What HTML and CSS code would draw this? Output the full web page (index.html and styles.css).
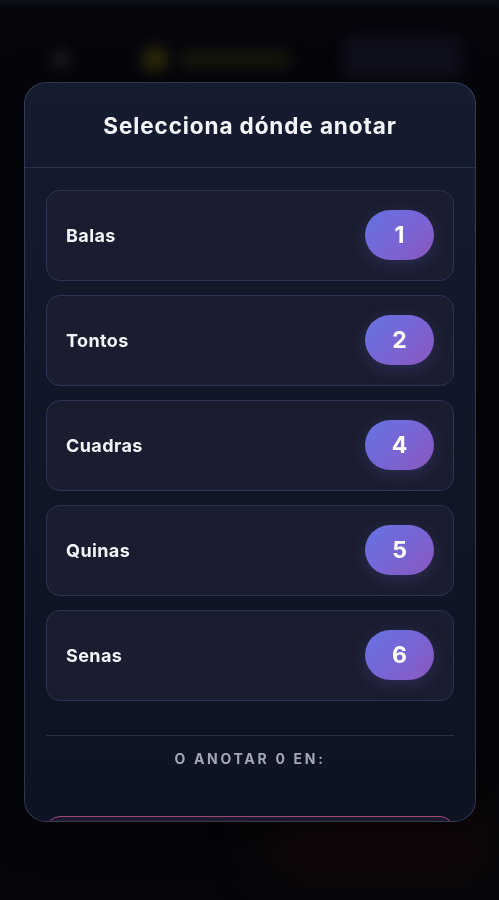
FILE: index.html
```html
<!DOCTYPE html>
<html lang="es">
<head>
    <meta charset="UTF-8">
    <meta name="viewport" content="width=device-width, initial-scale=1.0">
    <title>Anotar</title>
    <link rel="stylesheet" href="styles.css">
</head>
<body>
    <div class="app">
        <header class="topbar">
            <div class="back-dot"></div>
            <div class="brand">
                <span class="brand-coin"></span>
                <span class="brand-bar"></span>
            </div>
            <div class="top-btn"></div>
        </header>
        <div class="bottom-glow"></div>
    </div>

    <div class="overlay">
        <div class="modal">
            <div class="modal-header">
                <h2>Selecciona dónde anotar</h2>
            </div>
            <div class="modal-body">
                <div class="options">
                    <button class="option"><span class="option-name">Balas</span><span class="badge">1</span></button>
                    <button class="option"><span class="option-name">Tontos</span><span class="badge">2</span></button>
                    <button class="option"><span class="option-name">Cuadras</span><span class="badge">4</span></button>
                    <button class="option"><span class="option-name">Quinas</span><span class="badge">5</span></button>
                    <button class="option"><span class="option-name">Senas</span><span class="badge">6</span></button>
                </div>
                <div class="zero-section">
                    <div class="zero-label">O ANOTAR 0 EN:</div>
                    <button class="zero-btn" aria-label="Anotar 0"></button>
                </div>
            </div>
        </div>
    </div>
</body>
</html>
```

FILE: styles.css
```css
* {
    margin: 0;
    padding: 0;
    box-sizing: border-box;
}

body {
    font-family: Inter, 'Noto Sans', 'Liberation Sans', sans-serif;
    background-color: #04060b;
    color: #ffffff;
    height: 900px;
    overflow: hidden;
}

.app {
    height: 900px;
    background: linear-gradient(180deg, #0e1018 0, #05060c 10px, #04060b 100%);
    position: relative;
}

.topbar {
    display: flex;
    align-items: center;
    padding: 38px 38px 0 52px;
    filter: blur(7px);
    opacity: 0.5;
}

.back-dot {
    width: 18px;
    height: 18px;
    border-radius: 50%;
    background: #3a3a40;
}

.brand {
    display: flex;
    align-items: center;
    gap: 12px;
    margin-left: 72px;
}

.brand-coin {
    width: 26px;
    height: 26px;
    border-radius: 50%;
    background: #564b06;
}

.brand-bar {
    width: 110px;
    height: 18px;
    border-radius: 6px;
    background: #2a280c;
}

.top-btn {
    margin-left: auto;
    width: 118px;
    height: 42px;
    border-radius: 12px;
    background: #1a1a30;
}

.bottom-glow {
    position: absolute;
    left: 270px;
    top: 810px;
    width: 220px;
    height: 60px;
    background: #2a0a08;
    filter: blur(30px);
    opacity: 0.6;
}

.overlay {
    position: fixed;
    inset: 0;
    padding: 82px 23px 0 24px;
}

.modal {
    height: 740px;
    background: linear-gradient(180deg, #161c30 0%, #111728 40%, #0e1322 100%);
    border: 1px solid rgba(110, 120, 160, 0.35);
    border-radius: 22px;
    overflow: hidden;
    display: flex;
    flex-direction: column;
    box-shadow: 0 10px 40px rgba(0, 0, 0, 0.6);
}

.modal-header {
    height: 85px;
    flex-shrink: 0;
    display: flex;
    align-items: center;
    justify-content: center;
    border-bottom: 1px solid rgba(120, 130, 170, 0.22);
}

.modal-header h2 {
    font-size: 22.5px;
    font-weight: 700;
    color: #f4f5f8;
    letter-spacing: 0.9px;
    padding-top: 1px;
}

.modal-body {
    padding: 22px 21px 0;
}

.options {
    display: flex;
    flex-direction: column;
    gap: 14.5px;
}

.option {
    height: 90.5px;
    display: flex;
    align-items: center;
    justify-content: space-between;
    padding: 0 19px 0 19px;
    background: #1a1d2f;
    border: 1px solid #2d3352;
    border-radius: 14px;
    font-family: inherit;
    color: #ffffff;
    cursor: pointer;
}

.option-name {
    font-size: 18px;
    font-weight: 700;
    letter-spacing: 0.4px;
    color: #f3f4f7;
}

.badge {
    width: 69px;
    height: 50px;
    border-radius: 25px;
    background: linear-gradient(135deg, #6473e2 0%, #7a64d4 55%, #8a57bd 100%);
    box-shadow: 0 4px 16px rgba(100, 90, 200, 0.25);
    display: flex;
    align-items: center;
    justify-content: center;
    font-size: 23px;
    font-weight: 700;
    color: #ffffff;
}

.zero-section {
    margin-top: 34px;
    border-top: 1px solid rgba(120, 130, 170, 0.25);
    padding-top: 14px;
}

.zero-label {
    text-align: center;
    font-size: 14px;
    font-weight: 700;
    letter-spacing: 2.7px;
    color: #a3a7b4;
}

.zero-btn {
    display: block;
    width: 100%;
    height: 60px;
    margin-top: 49px;
    border: 1px solid #a04a78;
    border-radius: 14px;
    background: #1c1a2c;
}
```
